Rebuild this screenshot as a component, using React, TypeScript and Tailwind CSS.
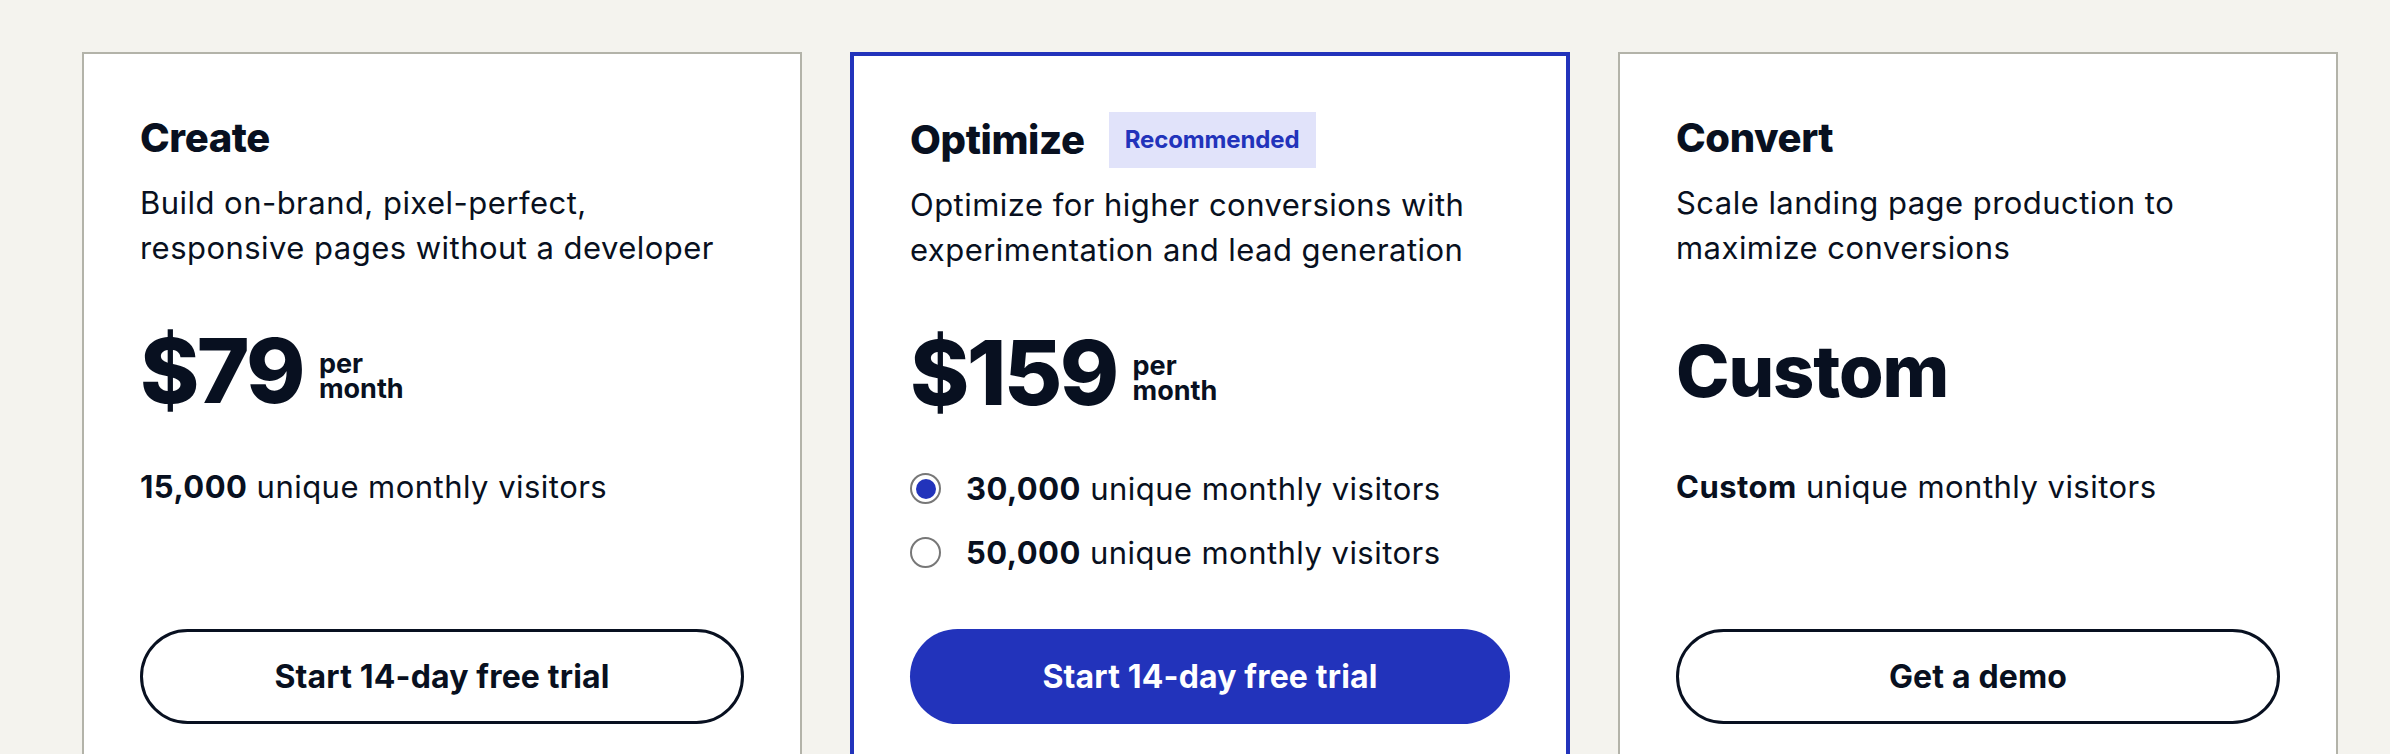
import { useState } from "react";

type Plan = {
  name: string;
  description: string;
  price: string;
  isCustom?: boolean;
  badge?: string;
  visitors: string[];
  cta: string;
  highlighted?: boolean;
};

const plans: Plan[] = [
  {
    name: "Create",
    description: "Build on-brand, pixel-perfect, responsive pages without a developer",
    price: "$79",
    visitors: ["15,000"],
    cta: "Start 14-day free trial",
  },
  {
    name: "Optimize",
    badge: "Recommended",
    description: "Optimize for higher conversions with experimentation and lead generation",
    price: "$159",
    visitors: ["30,000", "50,000"],
    cta: "Start 14-day free trial",
    highlighted: true,
  },
  {
    name: "Convert",
    description: "Scale landing page production to maximize conversions",
    price: "Custom",
    isCustom: true,
    visitors: ["Custom"],
    cta: "Get a demo",
  },
];

function PlanCard({ plan }: { plan: Plan }) {
  const [selected, setSelected] = useState(0);

  return (
    <div
      className={
        plan.highlighted
          ? "flex flex-col bg-white border-4 border-[#2233bb] p-14 pb-24"
          : "flex flex-col bg-white border-2 border-[#b3b3a9] p-14 pb-24"
      }
    >
      {/* Header */}
      <div className="flex h-14 items-center gap-6">
        <h2 className="text-[40px] font-extrabold leading-[46px] tracking-[-0.01em]">
          {plan.name}
        </h2>
        {plan.badge && (
          <span className="flex h-14 items-center bg-[#e1e3fa] px-[16px] text-[24px] font-bold text-[#2233bb] tracking-[-0.005em]">
            {plan.badge}
          </span>
        )}
      </div>

      <p className="mt-3.5 text-[31px] leading-[45px] tracking-[0.015em]">
        {plan.description}
      </p>

      {/* Price */}
      <div className="mt-14 flex h-[90px] items-center">
        {plan.isCustom ? (
          <span className="text-[72px] font-extrabold leading-none tracking-[-0.015em]">
            {plan.price}
          </span>
        ) : (
          <>
            <span className="text-[90px] font-extrabold leading-none tracking-[-0.03em]">
              {plan.price}
            </span>
            <span className="ml-4 mb-[15px] self-end text-[27px] font-bold leading-[25px]">
              per
              <br />
              month
            </span>
          </>
        )}
      </div>

      {/* Visitors */}
      <div className="mt-12 flex min-h-[130px] flex-col gap-[19px]">
        {plan.visitors.length > 1
          ? plan.visitors.map((v, i) => (
              <button
                key={v}
                onClick={() => setSelected(i)}
                className="flex items-center gap-[25px] text-left"
              >
                <span className="flex h-[31px] w-[31px] shrink-0 items-center justify-center rounded-full border-2 border-[#777777]">
                  {selected === i && (
                    <span className="h-5 w-5 rounded-full bg-[#2233bb]"></span>
                  )}
                </span>
                <span className="text-[31px] leading-[45px] tracking-[0.015em]">
                  <span className="font-bold">{v}</span> unique monthly visitors
                </span>
              </button>
            ))
          : plan.visitors.map((v) => (
              <p key={v} className="text-[31px] leading-[45px] tracking-[0.015em]">
                <span className="font-bold">{v}</span> unique monthly visitors
              </p>
            ))}
      </div>

      <button
        className={
          plan.highlighted
            ? "mt-[33px] h-[95px] w-full rounded-full bg-[#2233bb] text-[32px] font-bold text-white tracking-[0.005em]"
            : "mt-[35px] h-[95px] w-full rounded-full border-[3px] border-[#081020] bg-white text-[32px] font-bold tracking-[0.005em]"
        }
      >
        {plan.cta}
      </button>
    </div>
  );
}

export default function App() {
  return (
    <main className="h-[754px] overflow-hidden bg-[#f4f3ee] pl-[82px] pt-[52px] font-['Inter','Noto_Sans',sans-serif] text-[#081020]">
      <div className="grid w-[2256px] grid-cols-3 gap-12">
        {plans.map((plan) => (
          <PlanCard key={plan.name} plan={plan} />
        ))}
      </div>
    </main>
  );
}
